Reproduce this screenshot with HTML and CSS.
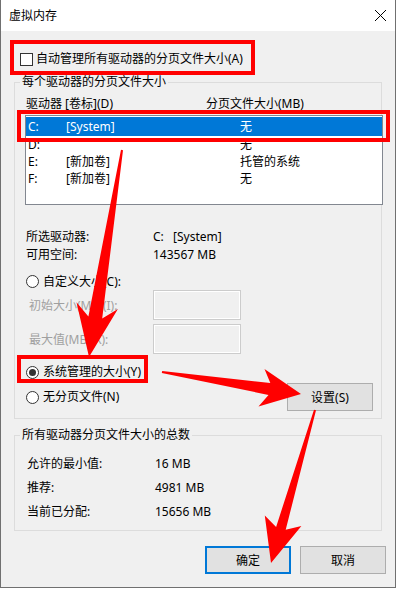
FILE: index.html
```html
<!DOCTYPE html>
<html lang="zh-CN">
<head>
    <meta charset="UTF-8">
    <meta name="viewport" content="width=device-width, initial-scale=1.0">
    <title>虚拟内存</title>
    <link rel="stylesheet" href="styles.css">
</head>
<body>
    <div class="screen">
        <div class="dialog">
            <div class="titlebar">
                <span class="title">虚拟内存</span>
                <svg class="close" width="11" height="11" viewBox="0 0 11 11">
                    <path d="M0 0 L11 11 M11 0 L0 11" stroke="#000" stroke-width="1" fill="none"/>
                </svg>
            </div>

            <div class="content">
                <label class="auto-row"><span class="checkbox"></span>自动管理所有驱动器的分页文件大小(A)</label>

                <fieldset class="group group-drives">
                    <legend>每个驱动器的分页文件大小</legend>
                    <div class="list-head">
                        <span class="col-drive">驱动器 [卷标](D)</span>
                        <span>分页文件大小(MB)</span>
                    </div>
                    <div class="listbox">
                        <div class="list-row selected"><span class="c1">C:</span><span class="c2">[System]</span><span>无</span></div>
                        <div class="list-row"><span class="c1">D:</span><span class="c2"></span><span>无</span></div>
                        <div class="list-row"><span class="c1">E:</span><span class="c2">[新加卷]</span><span>托管的系统</span></div>
                        <div class="list-row"><span class="c1">F:</span><span class="c2">[新加卷]</span><span>无</span></div>
                    </div>

                    <div class="info">
                        <div class="info-row"><span class="info-label">所选驱动器:</span><span><span class="drive-letter">C:</span>[System]</span></div>
                        <div class="info-row"><span class="info-label">可用空间:</span><span>143567 MB</span></div>
                    </div>

                    <div class="radio-row custom"><span class="radio"></span>自定义大小(C):</div>
                    <div class="size-row"><span class="size-label">初始大小(MB)(I):</span><span class="size-box"></span></div>
                    <div class="size-row"><span class="size-label">最大值(MB)(X):</span><span class="size-box"></span></div>

                    <div class="radio-row managed"><span class="radio checked"></span>系统管理的大小(Y)</div>
                    <div class="set-row">
                        <div class="radio-row"><span class="radio"></span>无分页文件(N)</div>
                        <button type="button" class="btn">设置(S)</button>
                    </div>
                </fieldset>

                <fieldset class="group group-total">
                    <legend>所有驱动器分页文件大小的总数</legend>
                    <div class="total-row"><span class="total-label">允许的最小值:</span><span>16 MB</span></div>
                    <div class="total-row"><span class="total-label">推荐:</span><span>4981 MB</span></div>
                    <div class="total-row"><span class="total-label">当前已分配:</span><span>15656 MB</span></div>
                </fieldset>
            </div>

            <div class="footer">
                <button type="button" class="btn btn-default">确定</button>
                <button type="button" class="btn">取消</button>
            </div>
        </div>

        <!-- red markup drawn over the dialog -->
        <svg class="annotations" width="396" height="589" viewBox="0 0 396 589">
            <g fill="none" stroke="#f00" stroke-width="4">
                <rect x="12" y="42" width="241" height="31"/>
                <rect x="19" y="112" width="369" height="28"/>
                <rect x="19" y="357" width="127" height="24"/>
            </g>
            <g fill="#f00">
                <polygon points="123,150.2 102.2,318.6 117.9,308.9 89,357 76.5,302.3 88.4,316.4 121,149.8"/>
                <polygon points="162.2,371 270.3,383.1 264.5,369 301,394 258.5,406.6 268.5,394.9 161.8,373"/>
                <polygon points="316,410.3 285.7,529.8 301.4,525.9 271,563 264.8,515.5 276.1,527 314,409.7"/>
            </g>
        </svg>
    </div>
</body>
</html>
```

FILE: styles.css
```css
* {
    margin: 0;
    padding: 0;
    box-sizing: border-box;
}

body {
    background: #fff;
    font-family: "Noto Sans", "Noto Sans CJK SC", sans-serif;
    font-size: 12px;
    color: #000;
}

.screen {
    position: relative;
    width: 396px;
    height: 589px;
    overflow: hidden;
}

.dialog {
    width: 396px;
    height: 588px;
    background: #f0f0f0;
    border: 1px solid #707070;
    border-top: none;
}

/* Title bar */
.titlebar {
    height: 31px;
    background: #fff;
    display: flex;
    align-items: center;
    justify-content: space-between;
    padding: 0 9px 0 8px;
}

.title {
    line-height: 16px;
}

.content {
    padding: 0 13px;
}

/* Checkbox / radio */
.auto-row {
    display: flex;
    align-items: center;
    height: 20px;
    margin-top: 18px;
    padding-left: 6px;
    line-height: 20px;
}

.checkbox {
    width: 13px;
    height: 13px;
    border: 1px solid #333;
    background: #fff;
    margin-right: 3px;
}

.radio-row {
    display: flex;
    align-items: center;
    height: 18px;
    padding-left: 11px;
    line-height: 18px;
}

.radio {
    width: 13px;
    height: 13px;
    border: 1px solid #333;
    border-radius: 50%;
    background: #fff;
    margin-right: 4px;
    display: flex;
    align-items: center;
    justify-content: center;
}

.radio.checked::after {
    content: "";
    width: 7px;
    height: 7px;
    border-radius: 50%;
    background: #333;
}

/* Group boxes */
.group {
    border: 1px solid #dcdcdc;
    min-inline-size: 0;
}

.group legend {
    margin-left: 5px;
    padding: 0 2px;
    line-height: 16px;
}

.group-drives {
    margin-top: 5px;
    padding-bottom: 7px;
}

.list-head {
    display: flex;
    margin-top: 6px;
    padding-left: 11px;
    line-height: 16px;
}

.col-drive {
    width: 180px;
}

.listbox {
    width: 358px;
    height: 90px;
    margin: 3px 0 0 10px;
    background: #fff;
    border: 1px solid #828790;
    padding-top: 1px;
}

.list-row {
    display: flex;
    line-height: 17px;
    padding-left: 2px;
}

.list-row.selected {
    background: #0078d7;
    color: #fff;
    padding-top: 1px;
    padding-bottom: 1px;
}

.list-row .c1 {
    width: 38px;
}

.list-row .c2 {
    width: 174px;
}

.info {
    margin-top: 23px;
    padding-left: 11px;
}

.info-row {
    display: flex;
    line-height: 18px;
}

.info-label {
    width: 127px;
}

.drive-letter {
    display: inline-block;
    width: 20px;
}

.radio-row.custom {
    height: 17px;
    margin-top: 9px;
}

.size-row {
    display: flex;
    align-items: center;
    height: 30px;
    padding-left: 14px;
    color: #a0a0a0;
}

.size-row + .size-row {
    margin-top: 4px;
}

.size-label {
    width: 124px;
}

.size-box {
    width: 88px;
    height: 30px;
    border: 1px solid #cccccc;
    box-shadow: inset 0 0 0 1px #fff;
}

.radio-row.managed {
    margin-top: 9px;
}

.set-row {
    display: flex;
    align-items: center;
    justify-content: space-between;
    height: 28px;
    margin-top: 2px;
    padding-right: 8px;
}

.set-row .radio-row {
    padding-left: 11px;
}

/* Buttons */
.btn {
    width: 86px;
    height: 28px;
    background: #e1e1e1;
    border: 1px solid #adadad;
    font-family: inherit;
    font-size: 12px;
    color: #000;
}

.btn-default {
    border: 2px solid #0078d7;
}

.group-total {
    margin-top: 8px;
    padding-top: 9px;
    padding-bottom: 6px;
}

.total-row {
    display: flex;
    line-height: 24px;
    padding-left: 12px;
}

.total-label {
    width: 128px;
}

.footer {
    display: flex;
    justify-content: flex-end;
    gap: 9px;
    margin-top: 15px;
    padding-right: 9px;
}

.annotations {
    position: absolute;
    top: 0;
    left: 0;
    pointer-events: none;
}
```
